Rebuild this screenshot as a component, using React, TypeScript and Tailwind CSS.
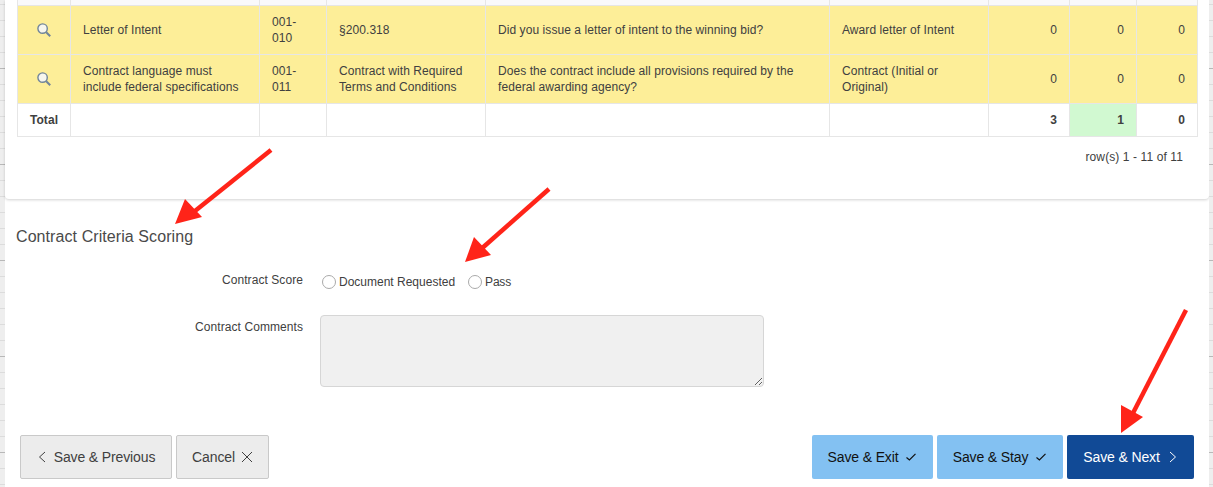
import React from 'react';

interface Row {
  title: string[];
  code: string[];
  reference: string[];
  question: string[];
  document: string[];
}

const ROWS: Row[] = [
  {
    title: ['Letter of Intent'],
    code: ['001-', '010'],
    reference: ['§200.318'],
    question: ['Did you issue a letter of intent to the winning bid?'],
    document: ['Award letter of Intent']
  },
  {
    title: ['Contract language must', 'include federal specifications'],
    code: ['001-', '011'],
    reference: ['Contract with Required', 'Terms and Conditions'],
    question: ['Does the contract include all provisions required by the', 'federal awarding agency?'],
    document: ['Contract (Initial or', 'Original)']
  }
];

const COLUMN_WIDTHS = ['w-[53px]', 'w-[189px]', 'w-[67px]', 'w-[159px]', 'w-[344px]', 'w-[159px]', 'w-[81px]', 'w-[67px]', 'w-[61px]'];

const Lines = ({ lines }: { lines: string[] }) => (
  <>
    {lines.map((line) => (
      <span key={line} className="block whitespace-nowrap">{line}</span>
    ))}
  </>
);

const SearchIcon = () => (
  <svg width="14" height="14" viewBox="0 0 14 14" className="mx-auto block">
    <circle cx="5.6" cy="5.6" r="4.7" fill="#f7f6ee" stroke="#71859a" strokeWidth="1.4" />
    <path d="M9.2 9.2 13.2 13.2" stroke="#71859a" strokeWidth="2" />
  </svg>
);

const ChevronLeft = () => (
  <svg width="8" height="12" viewBox="0 0 8 12" fill="none" stroke="#404040" strokeWidth="1">
    <path d="M7 1 1.5 6 7 11" />
  </svg>
);

const ChevronRight = () => (
  <svg width="8" height="12" viewBox="0 0 8 12" fill="none" stroke="#ffffff" strokeWidth="1">
    <path d="M1 1 6.5 6 1 11" />
  </svg>
);

const CloseIcon = () => (
  <svg width="12" height="12" viewBox="0 0 12 12" fill="none" stroke="#404040" strokeWidth="1">
    <path d="M1 1 11 11M11 1 1 11" />
  </svg>
);

const CheckIcon = () => (
  <svg width="10" height="8" viewBox="0 0 10 8" fill="none" stroke="#111111" strokeWidth="1.2">
    <path d="M.5 4.5 3.4 7 9.5 .8" />
  </svg>
);

// Strip of the sheet that shows behind the page
const SideStrip = ({ className }: { className: string }) => (
  <div className={`${className} shrink-0 h-full bg-[repeating-linear-gradient(to_bottom,transparent_0,transparent_68px,#b8b8b8_68px,#b8b8b8_69px,transparent_69px,transparent_96px),repeating-linear-gradient(to_bottom,#eeeeee_0,#eeeeee_4px,#dcdcdc_4px,#dcdcdc_5px,#eeeeee_5px,#eeeeee_16px)]`}></div>
);

const Arrows = () => (
  <svg width="1213" height="487" viewBox="0 0 1213 487" className="absolute top-0 left-0 pointer-events-none" fill="#ff2419" stroke="none">
    <path d="M271 150 190 215" stroke="#ff2419" strokeWidth="4.5" />
    <path d="M175 224 185 199 202 217Z" />
    <path d="M549 189 480 250" stroke="#ff2419" strokeWidth="4.5" />
    <path d="M465 262 474 237 491 255Z" />
    <path d="M1186 310 1132 415" stroke="#ff2419" strokeWidth="4.5" />
    <path d="M1121 433 1121 405 1143 417Z" />
  </svg>
);

export default function App() {
  return (
    <div className="relative flex w-[1213px] h-[487px] overflow-hidden bg-white text-[12px] leading-4 tracking-[0.07px] text-[#404040] font-['Liberation_Sans',Arial,sans-serif]">
      <SideStrip className="w-[5px]" />

      <div className="flex-1 min-w-0 flex flex-col">
        {/* Report card */}
        <div className="h-[199px] shrink-0 px-3 bg-white rounded-b-sm shadow-[0_1px_3px_rgba(0,0,0,0.18)]">
          <table className="w-[1180px] table-fixed border-collapse">
            <colgroup>
              {COLUMN_WIDTHS.map((width, index) => (
                <col key={index} className={width} />
              ))}
            </colgroup>
            <tbody>
              <tr className="h-[5px] bg-[#f9f9fb]">
                {COLUMN_WIDTHS.map((_, index) => (
                  <td key={index} className="p-0 border-x border-[#e6e6e6]"></td>
                ))}
              </tr>
              {ROWS.map((row) => (
                <tr key={row.code[1]} className="h-[49px] bg-[#fdee98]">
                  <td className="p-0 border border-[#e6e6e6]"><SearchIcon /></td>
                  <td className="px-3 py-0 border border-[#e6e6e6]"><Lines lines={row.title} /></td>
                  <td className="px-3 py-0 border border-[#e6e6e6]"><Lines lines={row.code} /></td>
                  <td className="px-3 py-0 border border-[#e6e6e6]"><Lines lines={row.reference} /></td>
                  <td className="px-3 py-0 border border-[#e6e6e6]"><Lines lines={row.question} /></td>
                  <td className="px-3 py-0 border border-[#e6e6e6]"><Lines lines={row.document} /></td>
                  <td className="px-3 py-0 border border-[#e6e6e6] text-right">0</td>
                  <td className="px-3 py-0 border border-[#e6e6e6] text-right">0</td>
                  <td className="px-3 py-0 border border-[#e6e6e6] text-right">0</td>
                </tr>
              ))}
              <tr className="h-[33px] font-bold">
                <td className="p-0 border border-[#e6e6e6] text-center">Total</td>
                <td className="border border-[#e6e6e6]"></td>
                <td className="border border-[#e6e6e6]"></td>
                <td className="border border-[#e6e6e6]"></td>
                <td className="border border-[#e6e6e6]"></td>
                <td className="border border-[#e6e6e6]"></td>
                <td className="px-3 py-0 border border-[#e6e6e6] text-right">3</td>
                <td className="px-3 py-0 border border-[#e6e6e6] text-right bg-[#d1f9d1]">1</td>
                <td className="px-3 py-0 border border-[#e6e6e6] text-right">0</td>
              </tr>
            </tbody>
          </table>
          <div className="mt-3 w-[1166px] text-right tracking-[0.1px]">row(s) 1 - 11 of 11</div>
        </div>

        {/* Scoring form */}
        <h2 className="mt-[28px] ml-[11px] text-[16px] leading-5 tracking-[0.08px] font-normal text-[#4a4a4a]">Contract Criteria Scoring</h2>

        <div className="mt-[25px] flex h-5">
          <label className="w-[298px] shrink-0 text-right">Contract Score</label>
          <div className="ml-[19px] flex items-center tracking-normal">
            <input type="radio" name="score" className="appearance-none w-[14px] h-[14px] rounded-full border border-[#aaaaaa] bg-white" />
            <span className="ml-[3px]">Document Requested</span>
            <input type="radio" name="score" className="ml-[13px] appearance-none w-[14px] h-[14px] rounded-full border border-[#aaaaaa] bg-white" />
            <span className="ml-[3px] tracking-[-0.2px]">Pass</span>
          </div>
        </div>

        <div className="mt-[23px] flex">
          <label className="w-[298px] shrink-0 pt-1 text-right">Contract Comments</label>
          <textarea readOnly className="ml-[17px] block w-[444px] h-[72px] bg-[#f0f0f0] border border-[#d6d6d6] rounded-[4px] outline-none"></textarea>
        </div>

        {/* Wizard buttons */}
        <div className="mt-[48px] pl-[15px] pr-[15px] flex justify-between text-[14px] tracking-[-0.13px]">
          <div className="flex gap-1">
            <button className="h-11 w-[152px] pl-px flex items-center justify-center gap-2 bg-[#ececec] border border-[#c9c9c9] rounded-[2px]">
              <ChevronLeft />
              Save &amp; Previous
            </button>
            <button className="h-11 w-[93px] flex items-center justify-center gap-[6px] bg-[#ececec] border border-[#c9c9c9] rounded-[2px]">
              Cancel
              <CloseIcon />
            </button>
          </div>
          <div className="flex gap-1">
            <button className="h-11 w-[121px] pr-px flex items-center justify-center gap-2 bg-[#83c1f2] text-[#111111] rounded-[2px]">
              Save &amp; Exit
              <CheckIcon />
            </button>
            <button className="h-11 w-[126px] pr-px flex items-center justify-center gap-2 bg-[#83c1f2] text-[#111111] rounded-[2px]">
              Save &amp; Stay
              <CheckIcon />
            </button>
            <button className="h-11 w-[127px] pr-px flex items-center justify-center gap-[9px] bg-[#114a96] text-white rounded-[2px]">
              Save &amp; Next
              <ChevronRight />
            </button>
          </div>
        </div>
      </div>

      <SideStrip className="w-[4px]" />

      <Arrows />
    </div>
  );
}
